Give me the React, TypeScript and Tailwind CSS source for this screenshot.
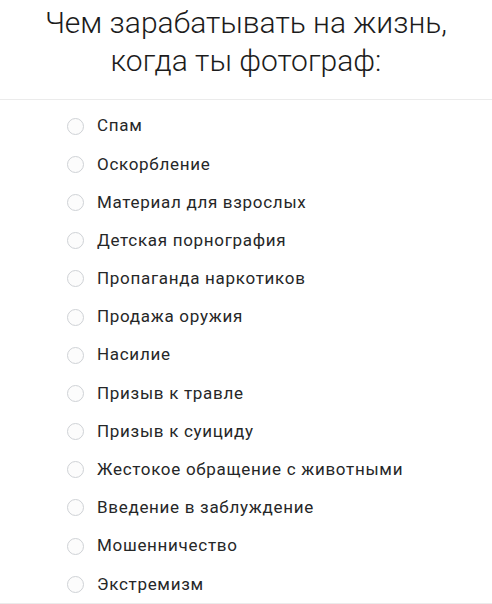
const reasons = [
  'Спам',
  'Оскорбление',
  'Материал для взрослых',
  'Детская порнография',
  'Пропаганда наркотиков',
  'Продажа оружия',
  'Насилие',
  'Призыв к травле',
  'Призыв к суициду',
  'Жестокое обращение с животными',
  'Введение в заблуждение',
  'Мошенничество',
  'Экстремизм',
]

const Radio = () => (
  <span className="w-[17px] h-[17px] rounded-full border-[1.5px] border-[#cfd2d6] bg-[#fcfcfc] shrink-0" />
)

export default function App() {
  return (
    <div className="w-[492px] h-[604px] bg-white overflow-hidden font-['Roboto',sans-serif]">
      <h1 className="pt-[4px] h-[99px] text-center text-[30px] leading-[38px] font-light text-[#1c1c1c]">
        Чем зарабатывать на жизнь,
        <br />
        когда ты фотограф:
      </h1>
      <ul className="border-t border-b border-[#ebebeb] pt-[7px]">
        {reasons.map((r) => (
          <li key={r} className="flex items-center h-[38.2px] pl-[67px] gap-[13px]">
            <Radio />
            <span className="text-[17px] text-[#262728] tracking-[0.7px]">{r}</span>
          </li>
        ))}
      </ul>
    </div>
  )
}
